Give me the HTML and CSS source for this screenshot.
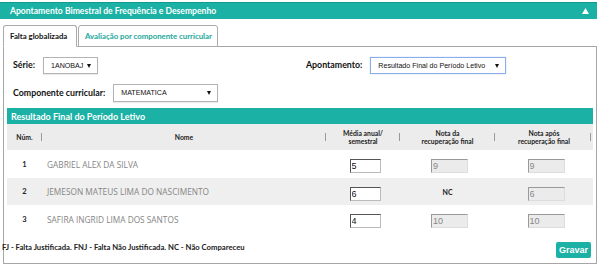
FILE: index.html
```html
<!DOCTYPE html>
<html lang="pt-BR">
<head>
<meta charset="utf-8">
<title>Apontamento Bimestral</title>
<link rel="stylesheet" href="styles.css">
</head>
<body>
<div class="titlebar">
  <span class="title">Apontamento Bimestral de Frequência e Desempenho</span>
  <svg class="collapse" width="7" height="6" viewBox="0 0 7 6"><polygon points="3.5,0 7,6 0,6" fill="#fff"/></svg>
</div>
<div class="tabs">
  <div class="tab active">Falta globalizada</div>
  <div class="tab link">Avaliação por componente curricular</div>
</div>
<div class="panel">
  <div class="filters">
    <div class="frow">
      <div class="fcell">
        <span class="flabel">Série:</span>
        <span class="sel w-serie"><span class="seltext">1ANOBAJ</span><span class="arrow"></span></span>
      </div>
      <div class="fcell right">
        <span class="flabel">Apontamento:</span>
        <span class="sel w-apont focus"><span class="seltext">Resultado Final do Período Letivo</span><span class="arrow"></span></span>
      </div>
    </div>
    <div class="frow">
      <div class="fcell">
        <span class="flabel">Componente curricular:</span>
        <span class="sel w-comp"><span class="seltext">MATEMATICA</span><span class="arrow"></span></span>
      </div>
    </div>
  </div>
  <div class="section">
    <div class="section-title">Resultado Final do Período Letivo</div>
    <table class="grid">
      <colgroup>
        <col class="c-num"><col class="c-nome"><col class="c-media"><col class="c-rec"><col class="c-apos">
      </colgroup>
      <thead>
        <tr>
          <th><span class="th">Núm.</span></th>
          <th><span class="th">Nome</span></th>
          <th><span class="th">Média anual/<br>semestral</span></th>
          <th><span class="th">Nota da<br>recuperação final</span></th>
          <th><span class="th">Nota após<br>recuperação final</span></th>
        </tr>
      </thead>
      <tbody>
        <tr>
          <td class="num">1</td>
          <td class="nome">GABRIEL ALEX DA SILVA</td>
          <td class="ctr"><input class="inp media" type="text" value="5"></td>
          <td class="ctr"><input class="inp dis" type="text" value="9" disabled></td>
          <td class="ctr"><input class="inp dis" type="text" value="9" disabled></td>
        </tr>
        <tr class="alt">
          <td class="num">2</td>
          <td class="nome">JEMESON MATEUS LIMA DO NASCIMENTO</td>
          <td class="ctr"><input class="inp media" type="text" value="6"></td>
          <td class="ctr nc">NC</td>
          <td class="ctr"><input class="inp dis" type="text" value="6" disabled></td>
        </tr>
        <tr>
          <td class="num">3</td>
          <td class="nome">SAFIRA INGRID LIMA DOS SANTOS</td>
          <td class="ctr"><input class="inp media" type="text" value="4"></td>
          <td class="ctr"><input class="inp dis" type="text" value="10" disabled></td>
          <td class="ctr"><input class="inp dis" type="text" value="10" disabled></td>
        </tr>
      </tbody>
    </table>
  </div>
  <div class="footer">
    <span class="legend">FJ - Falta Justificada. FNJ - Falta Não Justificada. NC - Não Compareceu</span>
    <button class="btn" type="button">Gravar</button>
  </div>
</div>
</body>
</html>
```
FILE: styles.css
```css
* { box-sizing: border-box; }
html, body { margin: 0; padding: 0; background: #fff; }
body {
  width: 600px;
  height: 267px;
  overflow: hidden;
  font-family: "Lato", "Open Sans", sans-serif;
  color: #222;
}

.titlebar {
  margin-top: 2px;
  width: 597px;
  height: 17px;
  background: #1bb1a5;
  border-top: 1px solid #0f9c90;
  display: flex;
  align-items: center;
  justify-content: space-between;
  padding: 0 8px 0 10px;
}
.title {
  color: #fff;
  font-weight: 700;
  font-size: 8.6px;
}
.collapse { display: block; margin-top: -1px; }

.tabs {
  display: flex;
  gap: 1px;
  margin-top: 6px;
  padding-left: 3px;
  position: relative;
  z-index: 2;
}
.tab {
  height: 22px;
  border: 1px solid #aaa;
  border-bottom: 1px solid #aaa;
  border-radius: 3px 3px 0 0;
  background: #fff;
  font-weight: 700;
  font-size: 7.8px;
  display: flex;
  align-items: center;
  white-space: nowrap;
  padding: 0 6px;
}
.tab.active {
  width: 74px;
  color: #111;
  border-bottom-color: #fff;
}
.tab.link {
  width: 140px;
  color: #1aa79b;
  padding-left: 6px;
  font-size: 7.8px;
}

.panel {
  margin: -1px 3px 0 3px;
  height: 218px;
  border: 1px solid #a6a6a6;
  display: flex;
  flex-direction: column;
}

.filters {
  padding: 10px 0 0 9px;
  display: flex;
  flex-direction: column;
  gap: 10px;
}
.frow { display: flex; align-items: center; }
.fcell { display: flex; align-items: center; }
.fcell:first-child { width: 293px; }
.flabel {
  font-weight: 700;
  font-size: 8.8px;
  color: #111;
  margin-right: 8px;
  margin-top: -3px;
}
.frow:nth-child(2) .flabel { margin-right: 8px; margin-top: -2px; }

.sel {
  position: relative;
  display: flex;
  align-items: center;
  height: 17px;
  border: 1px solid #b3b3b3;
  background: #fff;
  font-family: "Liberation Sans", Arial, sans-serif;
  font-size: 7.1px;
  color: #111;
  padding-left: 7px;
  white-space: nowrap;
  box-shadow: 0 1px 1px rgba(0,0,0,0.08);
}
.sel.focus { border-color: #8aaee8; box-shadow: 0 0 1px #a8c4f0; }
.w-serie { width: 55px; }
.w-apont { width: 136px; }
.w-comp { width: 105px; height: 18px; }
.arrow {
  position: absolute;
  right: 6px;
  top: 6px;
  width: 0;
  height: 0;
  border-left: 2.5px solid transparent;
  border-right: 2.5px solid transparent;
  border-top: 4px solid #111;
}

.section {
  margin: 6px 3px 0 3px;
}
.section-title {
  height: 16px;
  background: #1bb1a5;
  color: #fff;
  font-weight: 700;
  font-size: 9px;
  display: flex;
  align-items: center;
  padding-left: 4px;
}

.grid {
  width: 100%;
  border-collapse: collapse;
  table-layout: fixed;
}
.c-num { width: 35px; }
.c-nome { width: 284px; }
.c-media { width: 74px; }
.c-rec { width: 95px; }
.c-apos { width: 98px; }

.grid thead tr { background: #ececec; height: 26px; }
.grid th {
  font-weight: 700;
  font-size: 6.8px;
  line-height: 8.5px;
  color: #222;
  text-align: center;
  position: relative;
  padding: 0;
}
.grid th::after {
  content: "";
  position: absolute;
  right: 0;
  top: 9px;
  width: 1px;
  height: 8px;
  background: #9a9a9a;
}
.grid th:last-child::after { right: 2px; }

.grid tbody tr { height: 28px; background: #fff; }
.grid tbody tr.alt { background: #efefef; height: 27px; }
.grid td { padding: 0; }
.num {
  text-align: center;
  font-weight: 700;
  font-size: 7.5px;
  color: #222;
}
.nome {
  font-family: "Open Sans", sans-serif;
  font-size: 8.3px;
  color: #858585;
  padding-left: 5px !important;
}
.ctr { text-align: center; }
.nc { font-weight: 700; font-size: 7px; color: #222; }

.inp {
  width: 31px;
  height: 14px;
  font-family: "Liberation Sans", Arial, sans-serif;
  font-size: 9px;
  padding: 0 1px;
  margin: 0;
  color: #111;
  background: #fff;
  border: 1px solid;
  border-color: #555 #bbb #bbb #555;
  vertical-align: middle;
  outline: none;
}
.inp.media { margin-left: 4px; }
.inp.dis {
  width: 37px;
  background: #ebebeb;
  color: #888;
  border-color: #999 #ddd #ddd #999;
  margin-left: 4px;
}

.footer {
  margin-top: auto;
  display: flex;
  align-items: center;
  justify-content: space-between;
  padding: 0 5px 5px 0;
}
.legend {
  font-weight: 700;
  font-size: 7.7px;
  color: #222;
  margin-left: -2px;
  margin-top: -6px;
  white-space: nowrap;
}
.btn {
  width: 35px;
  height: 16px;
  border: none;
  border-radius: 2px;
  background: #1bb1a5;
  color: #fff;
  font-family: "Liberation Sans", Arial, sans-serif;
  font-weight: 700;
  font-size: 9px;
  padding: 0;
}
```
